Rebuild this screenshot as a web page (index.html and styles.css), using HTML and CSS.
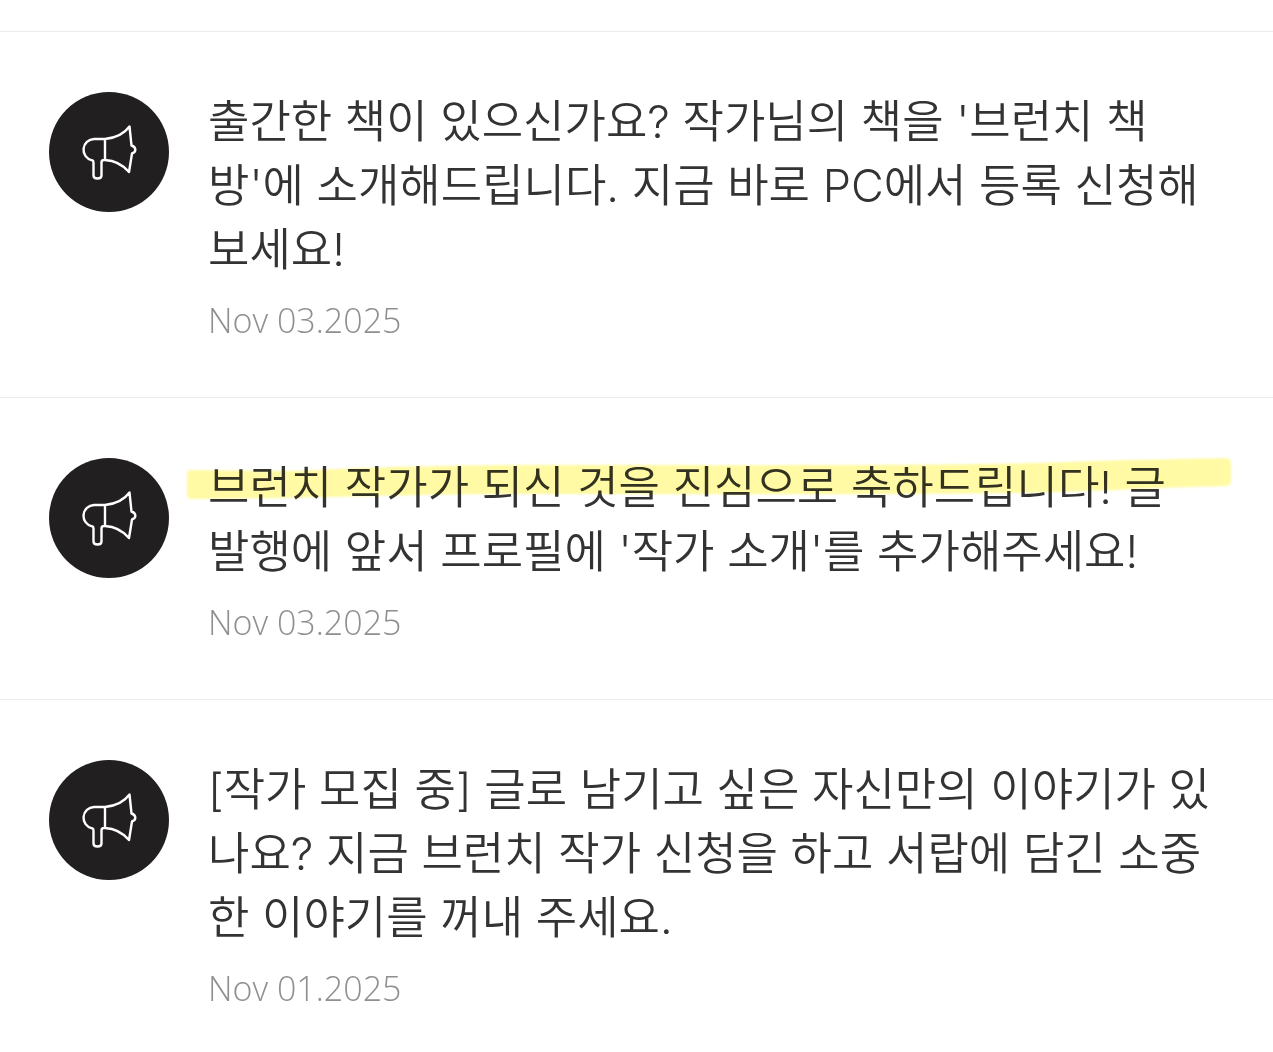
FILE: index.html
```html
<!DOCTYPE html>
<html lang="ko">
<head>
<meta charset="utf-8">
<meta name="viewport" content="width=device-width, initial-scale=1">
<title>알림</title>
<link rel="stylesheet" href="styles.css">
</head>
<body>
<svg class="sprite" aria-hidden="true">
  <symbol id="megaphone" viewBox="0 0 120 120">
    <path d="M56 47H45A11 10.800 0 0 0 43 68.300Q44.500 68.600 44.500 70.500V83.500C44.500 87.500 52.500 87.500 52.500 83.500V70.500Q52.500 68 55 68H56M56 47V68M56 47C66 46 75 42 80.500 34.500L82.500 53.500C87.500 55 87.500 60 83 61.500L80 80C74 73 66 68.500 56 68"/>
  </symbol>
</svg>
<main>
  <ul class="notices">
    <li class="notice">
      <span class="badge"><svg class="icon" aria-hidden="true"><use href="#megaphone"/></svg></span>
      <div class="content">
        <p class="message">출간한 책이 있으신가요? 작가님의 책을 '브런치 책방'에 소개해드립니다. 지금 바로 PC에서 등록 신청해보세요!</p>
        <time class="date" datetime="2025-11-03">Nov 03.2025</time>
      </div>
    </li>
    <li class="notice">
      <span class="badge"><svg class="icon" aria-hidden="true"><use href="#megaphone"/></svg></span>
      <div class="content">
        <p class="message">브런치 작가가 되신 것을 진심으로 축하드립니다! 글 발행에 앞서 프로필에 '작가 소개'를 추가해주세요!</p>
        <svg class="marker" viewBox="0 0 1046 44" preserveAspectRatio="none" aria-hidden="true">
          <path d="M5 14L110 15C210 10 290 9 360 9C560 9 740 10 850 7C930 4 1000 3 1040 2Q1045 2 1045 8V25Q1045 30 1039 30C960 32 900 36 830 37C690 39 480 38 330 38C230 38 100 43 5 43Q1 43 1 38V19Q1 14 5 14Z"/>
        </svg>
        <time class="date" datetime="2025-11-03">Nov 03.2025</time>
      </div>
    </li>
    <li class="notice">
      <span class="badge"><svg class="icon" aria-hidden="true"><use href="#megaphone"/></svg></span>
      <div class="content">
        <p class="message">[작가 모집 중] 글로 남기고 싶은 자신만의 이야기가 있나요? 지금 브런치 작가 신청을 하고 서랍에 담긴 소중한 이야기를 꺼내 주세요.</p>
        <time class="date" datetime="2025-11-01">Nov 01.2025</time>
      </div>
    </li>
  </ul>
</main>
</body>
</html>
```

FILE: styles.css
```css
body { margin: 0; background: #fff; color: #333; font-family: Inter, "Noto Sans CJK KR", sans-serif; }
.sprite { position: absolute; width: 0; height: 0; }
.notices { list-style: none; margin: 0; padding: 31px 0 0; }
.notice { display: flex; gap: 39px; padding: 58px 60px 57px 49px; border-top: 1px solid #ebebeb; }
.badge { flex: none; width: 120px; height: 120px; margin-top: 2px; border-radius: 50%; background: #221f20; }
.icon { display: block; width: 120px; height: 120px; fill: none; stroke: #fff; stroke-width: 2.4; stroke-linejoin: round; }
.content { position: relative; flex: 1; min-width: 0; }
.message { margin: 0; font-size: 45px; line-height: 64px; font-weight: 350; }
.date { display: block; margin-top: 18px; font-family: "Open Sans", "Noto Sans", sans-serif; font-size: 34px; line-height: 40px; font-weight: 300; color: #8f8f8f; }

/* highlighter stroke across the first line */
.marker { position: absolute; top: 0; left: -22px; width: calc(100% + 41px); height: 44px; fill: #fffaa3; mix-blend-mode: multiply; filter: blur(1px); }
```
